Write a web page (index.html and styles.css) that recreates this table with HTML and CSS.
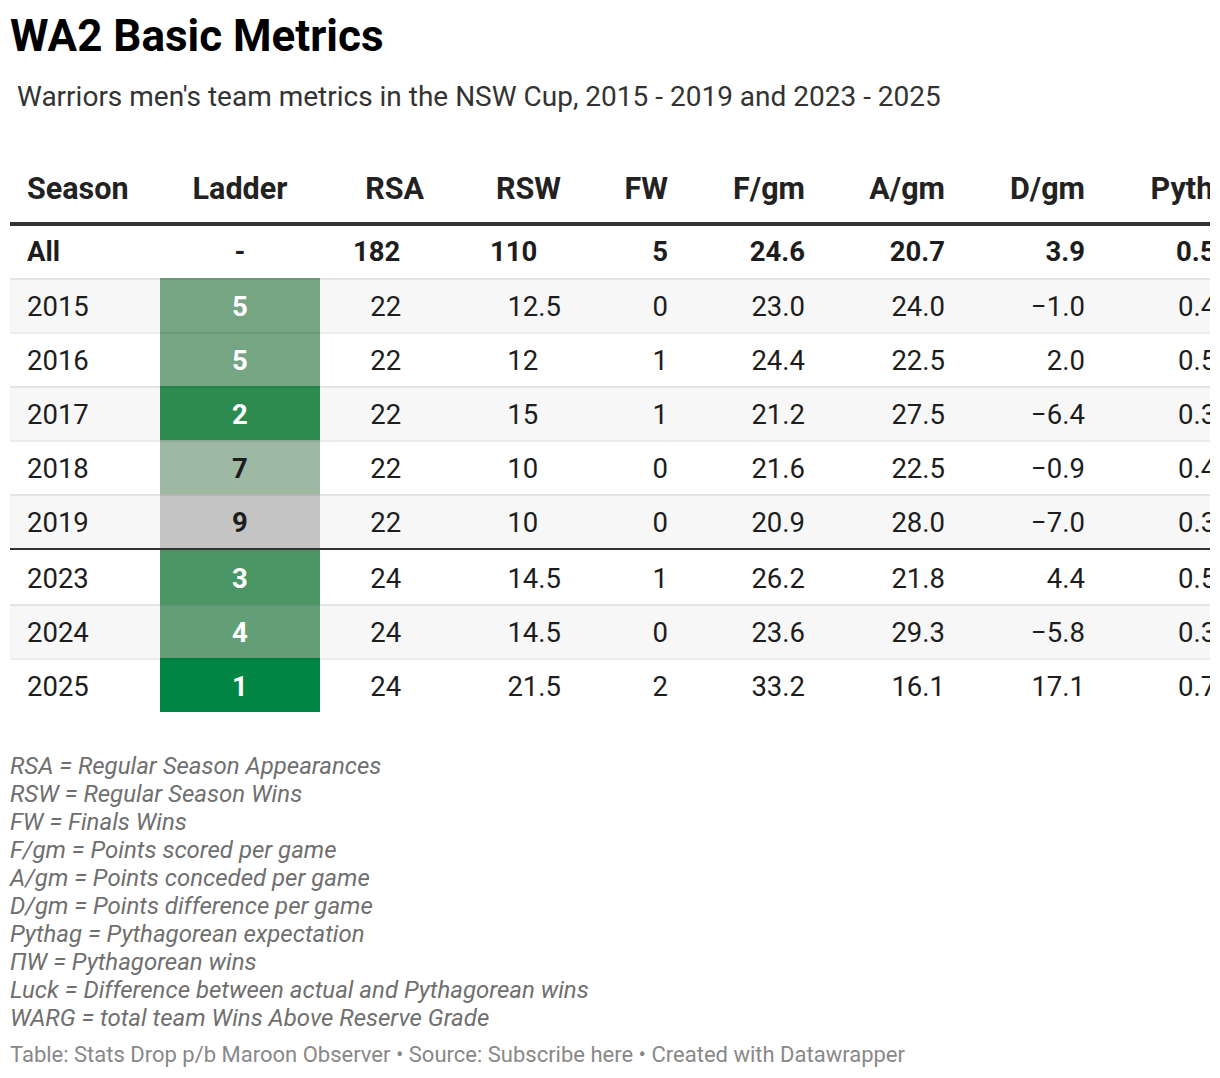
FILE: index.html
```html
<!DOCTYPE html>
<html lang="en">
<head>
<meta charset="utf-8">
<title>WA2 Basic Metrics</title>
<link rel="stylesheet" href="styles.css">
</head>
<body>
<div class="chart">
  <h1 class="title">WA2 Basic Metrics</h1>
  <p class="subtitle">Warriors men's team metrics in the NSW Cup, 2015 - 2019 and 2023 - 2025</p>
  <div class="table-wrap">
    <table class="metrics">
      <colgroup>
        <col class="c-season"><col class="c-ladder"><col class="c-rsa"><col class="c-rsw"><col class="c-fw"><col class="c-f"><col class="c-a"><col class="c-d"><col class="c-py"><col class="c-pw"><col class="c-luck"><col class="c-warg">
      </colgroup>
      <thead>
        <tr>
          <th class="left">Season</th>
          <th class="center">Ladder</th>
          <th>RSA</th>
          <th>RSW</th>
          <th>FW</th>
          <th>F/gm</th>
          <th>A/gm</th>
          <th>D/gm</th>
          <th>Pythag</th>
          <th>ΠW</th>
          <th>Luck</th>
          <th>WARG</th>
        </tr>
      </thead>
      <tbody>
        <tr class="total">
          <td class="left">All</td>
          <td class="center">-</td>
          <td>182<span class="ph">.5</span></td>
          <td>110<span class="ph">.5</span></td>
          <td>5</td>
          <td>24.6</td>
          <td>20.7</td>
          <td>3.9</td>
          <td>0.586</td>
          <td>106.7</td>
          <td>3.3</td>
          <td>21.3</td>
        </tr>
        <tr class="odd">
          <td class="left">2015</td>
          <td class="center rank r5">5</td>
          <td>22<span class="ph">.5</span></td>
          <td>12.5</td>
          <td>0</td>
          <td>23.0</td>
          <td>24.0</td>
          <td>−1.0</td>
          <td>0.479</td>
          <td>10.5</td>
          <td>2.0</td>
          <td>2.1</td>
        </tr>
        <tr>
          <td class="left">2016</td>
          <td class="center rank r5">5</td>
          <td>22<span class="ph">.5</span></td>
          <td>12<span class="ph">.5</span></td>
          <td>1</td>
          <td>24.4</td>
          <td>22.5</td>
          <td>2.0</td>
          <td>0.540</td>
          <td>11.9</td>
          <td>0.1</td>
          <td>1.6</td>
        </tr>
        <tr class="odd">
          <td class="left">2017</td>
          <td class="center rank r2">2</td>
          <td>22<span class="ph">.5</span></td>
          <td>15<span class="ph">.5</span></td>
          <td>1</td>
          <td>21.2</td>
          <td>27.5</td>
          <td>−6.4</td>
          <td>0.373</td>
          <td>8.2</td>
          <td>6.8</td>
          <td>4.6</td>
        </tr>
        <tr>
          <td class="left">2018</td>
          <td class="center rank r7">7</td>
          <td>22<span class="ph">.5</span></td>
          <td>10<span class="ph">.5</span></td>
          <td>0</td>
          <td>21.6</td>
          <td>22.5</td>
          <td>−0.9</td>
          <td>0.480</td>
          <td>10.6</td>
          <td>−0.6</td>
          <td>−0.2</td>
        </tr>
        <tr class="odd">
          <td class="left">2019</td>
          <td class="center rank r9">9</td>
          <td>22<span class="ph">.5</span></td>
          <td>10<span class="ph">.5</span></td>
          <td>0</td>
          <td>20.9</td>
          <td>28.0</td>
          <td>−7.0</td>
          <td>0.358</td>
          <td>7.9</td>
          <td>2.1</td>
          <td>−0.8</td>
        </tr>
        <tr class="split">
          <td class="left">2023</td>
          <td class="center rank r3">3</td>
          <td>24<span class="ph">.5</span></td>
          <td>14.5</td>
          <td>1</td>
          <td>26.2</td>
          <td>21.8</td>
          <td>4.4</td>
          <td>0.591</td>
          <td>14.2</td>
          <td>0.3</td>
          <td>2.9</td>
        </tr>
        <tr class="odd">
          <td class="left">2024</td>
          <td class="center rank r4">4</td>
          <td>24<span class="ph">.5</span></td>
          <td>14.5</td>
          <td>0</td>
          <td>23.6</td>
          <td>29.3</td>
          <td>−5.8</td>
          <td>0.394</td>
          <td>9.5</td>
          <td>5.0</td>
          <td>2.3</td>
        </tr>
        <tr>
          <td class="left">2025</td>
          <td class="center rank r1">1</td>
          <td>24<span class="ph">.5</span></td>
          <td>21.5</td>
          <td>2</td>
          <td>33.2</td>
          <td>16.1</td>
          <td>17.1</td>
          <td>0.781</td>
          <td>18.7</td>
          <td>2.8</td>
          <td>8.4</td>
        </tr>
      </tbody>
    </table>
  </div>
  <div class="notes">
    <p>RSA = Regular Season Appearances</p>
    <p>RSW = Regular Season Wins</p>
    <p>FW = Finals Wins</p>
    <p>F/gm = Points scored per game</p>
    <p>A/gm = Points conceded per game</p>
    <p>D/gm = Points difference per game</p>
    <p>Pythag = Pythagorean expectation</p>
    <p>ΠW = Pythagorean wins</p>
    <p>Luck = Difference between actual and Pythagorean wins</p>
    <p>WARG = total team Wins Above Reserve Grade</p>
  </div>
  <p class="footer">Table: Stats Drop p/b Maroon Observer • Source: Subscribe here • Created with Datawrapper</p>
</div>
</body>
</html>
```

FILE: styles.css
```css
html, body {
  margin: 0;
  padding: 0;
  background: #ffffff;
}

body {
  font-family: Roboto, "Liberation Sans", Arial, sans-serif;
  color: #1d1d1d;
}

.chart {
  padding: 10px 10px 0 10px;
}

.title {
  margin: 0;
  font-size: 44px;
  line-height: 52px;
  font-weight: 700;
  color: #000000;
}

.subtitle {
  margin: 19px 0 0 0;
  padding-left: 7px;
  font-size: 28px;
  line-height: 32px;
  font-weight: 400;
  color: #333333;
}

.table-wrap {
  margin-top: 38px;
  width: 1200px;
  overflow: hidden;
}

.metrics {
  border-collapse: separate;
  border-spacing: 0;
  table-layout: fixed;
  width: 1671px;
  font-size: 27.5px;
}

.c-season { width: 150px; }
.c-ladder { width: 160px; }
.c-rsa { width: 121px; }
.c-rsw { width: 137px; }
.c-fw { width: 107px; }
.c-f { width: 137px; }
.c-a { width: 140px; }
.c-d { width: 140px; }
.c-py { width: 162px; }
.c-pw { width: 130px; }
.c-luck { width: 130px; }
.c-warg { width: 157px; }

.metrics th {
  font-size: 30.5px;
  font-weight: 700;
  color: #222222;
  text-align: right;
  vertical-align: bottom;
  line-height: 32px;
  padding: 22px 17px 17px 17px;
  border-bottom: 4px solid #333333;
  white-space: nowrap;
}

.metrics td {
  text-align: right;
  padding: 2px 17px 0 17px;
  line-height: 50px;
  height: 50px;
  border-top: 2px solid rgba(0, 0, 0, 0.075);
  white-space: nowrap;
}

.metrics .left { text-align: left; }
.metrics .center { text-align: center; }

.metrics tr.total td {
  font-weight: 700;
  border-top: none;
  padding-top: 0;
  line-height: 52px;
  height: 52px;
}

.metrics tr.odd td {
  background: #f7f7f7;
}

.metrics tr.split td {
  border-top: 2px solid #333333;
  padding-top: 4px;
}

.ph {
  visibility: hidden;
}

.metrics td.rank {
  font-weight: 700;
  color: #ffffff;
}

.metrics tr td.r1 { background: #008542; }
.metrics tr td.r2 { background: #2e8b50; }
.metrics tr td.r3 { background: #4a9564; }
.metrics tr td.r4 { background: #629f76; }
.metrics tr td.r5 { background: #75a583; }
.metrics tr td.r7 { background: #9db8a3; color: #1d1d1d; }
.metrics tr td.r9 { background: #c4c4c4; color: #1d1d1d; }

.notes {
  margin-top: 40px;
}

.notes p {
  margin: 0;
  font-size: 24px;
  line-height: 28px;
  font-style: italic;
  color: #6f6f6f;
}

.footer {
  margin: 9px 0 0 0;
  font-size: 22px;
  line-height: 28px;
  color: #888888;
}
```
